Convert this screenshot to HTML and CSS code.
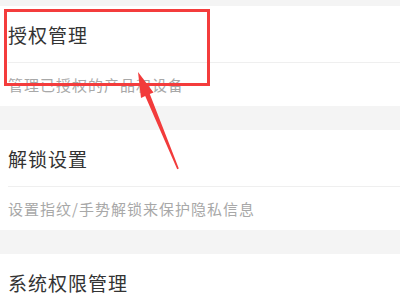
FILE: index.html
```html
<!DOCTYPE html>
<html lang="zh-CN">
<head>
<meta charset="utf-8">
<title>设置</title>
<link rel="stylesheet" href="styles.css">
</head>
<body>
<div class="page">
  <div class="gap gap-top"></div>
  <section class="group">
    <div class="title-row">授权管理</div>
    <div class="divider"></div>
    <div class="sub-row">管理已授权的产品和设备</div>
  </section>
  <div class="gap"></div>
  <section class="group">
    <div class="title-row">解锁设置</div>
    <div class="divider"></div>
    <div class="sub-row">设置指纹/手势解锁来保护隐私信息</div>
  </section>
  <div class="gap"></div>
  <section class="group">
    <div class="title-row">系统权限管理</div>
  </section>

  <div class="highlight"></div>
  <svg class="arrow" width="400" height="300" viewBox="0 0 400 300">
    <polygon points="138,72 153.5,92.5 149.8,94 178.8,168.5 177.2,169.2 145.2,96 141,98" fill="#f23b3b"/>
  </svg>
</div>
</body>
</html>
```

FILE: styles.css
```css
html, body {
  margin: 0;
  padding: 0;
  background: #ffffff;
}
body {
  font-family: "Noto Sans CJK SC", "Noto Sans", sans-serif;
  overflow: hidden;
}
.page {
  position: relative;
  width: 400px;
  height: 300px;
  overflow: hidden;
  background: #ffffff;
}
.gap {
  height: 24px;
  background: #f4f4f4;
}
.gap-top {
  height: 6px;
}
.group {
  background: #ffffff;
}
.title-row {
  height: 56px;
  display: flex;
  align-items: center;
  padding-left: 8px;
  font-size: 19px;
  letter-spacing: 1px;
  color: #333333;
}
.divider {
  height: 1px;
  margin-left: 8px;
  background: #efefef;
}
.sub-row {
  height: 43px;
  display: flex;
  align-items: center;
  padding-left: 8px;
  font-size: 15px;
  letter-spacing: 1px;
  color: #a8a8a8;
}
.highlight {
  position: absolute;
  left: 4px;
  top: 9px;
  width: 200px;
  height: 71px;
  border: 3px solid #f43c3c;
}
.arrow {
  position: absolute;
  left: 0;
  top: 0;
}
```
